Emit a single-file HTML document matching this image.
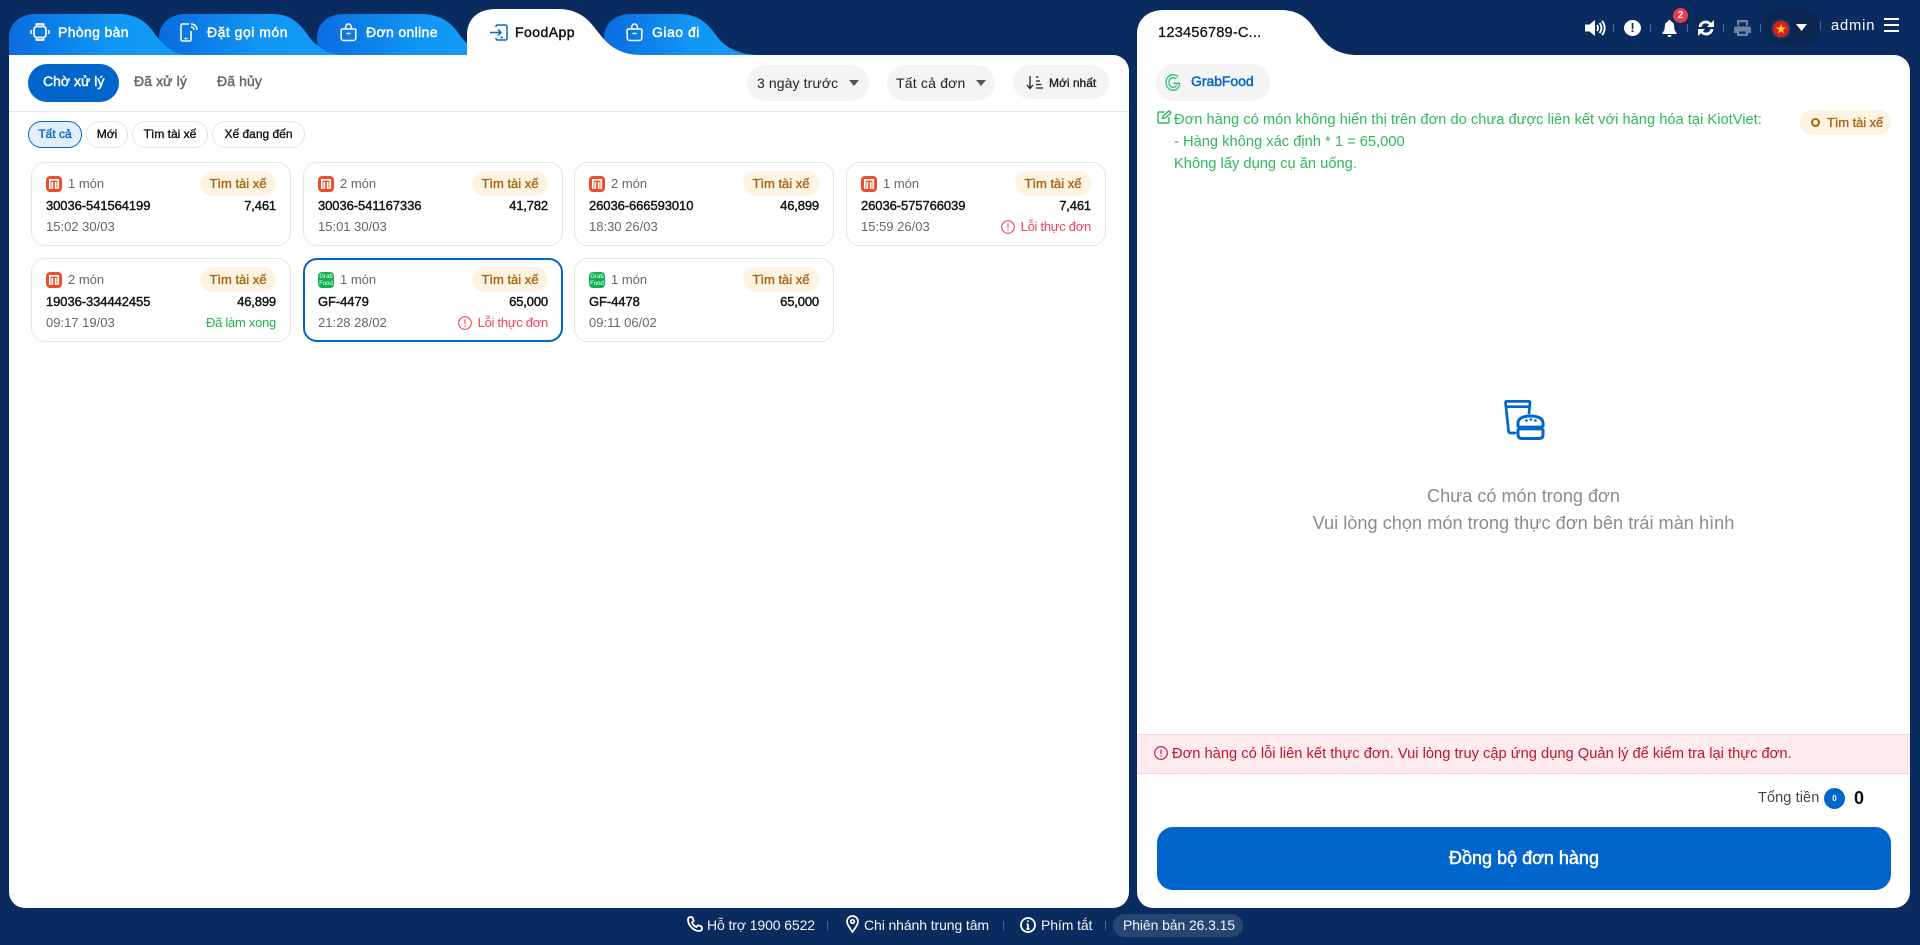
<!DOCTYPE html>
<html lang="vi"><head><meta charset="utf-8"><title>FoodApp</title>
<style>
*{box-sizing:border-box}
html,body{margin:0;padding:0;width:1920px;height:945px;overflow:hidden;background:#0a2b60;font-family:"Liberation Sans",Arial,sans-serif}
.a{position:absolute;white-space:nowrap}
.t{position:absolute;white-space:nowrap;line-height:20px;height:20px}
.m{font-weight:400;-webkit-text-stroke:.45px currentColor}
svg{position:absolute;overflow:visible}
.card{position:absolute;width:260px;height:84px;background:#fff;border:1px solid #e4e4e4;border-radius:14px}
.card.sel{border:2px solid #0066cc}
.card .pill{position:absolute;right:14px;top:8px;width:76px;height:25px;border-radius:13px;background:#fdf3e3;color:#a5660f;font-size:13px;-webkit-text-stroke:.35px currentColor;text-align:center;line-height:25px}
.card .ic{position:absolute;left:14px;top:13px;width:16px;height:16px;border-radius:4px}
.card .n{position:absolute;left:36px;top:11px;font-size:13px;line-height:20px;color:#666}
.card .id{position:absolute;left:14px;top:33px;font-size:13px;line-height:20px;color:#111;-webkit-text-stroke:.4px currentColor;letter-spacing:-.08px}
.card .p{position:absolute;right:14px;top:33px;font-size:13px;line-height:20px;color:#111;-webkit-text-stroke:.4px currentColor;letter-spacing:-.15px}
.card .d{position:absolute;left:14px;top:54px;font-size:13px;line-height:20px;color:#666}
.card .s{position:absolute;right:14px;top:54px;font-size:13px;line-height:20px;letter-spacing:-.27px}
.card .e{color:#f0435c}.card .g{color:#22b14c}
.shop{background:#ee4d2d}
.grab{background:#0fb050;color:#fff;font-size:6px;line-height:6.5px;text-align:center;padding-top:2px}
.chip{position:absolute;top:121px;height:27px;border:1px solid #e6e6e6;border-radius:14px;background:#fff;color:#111;font-size:12px;-webkit-text-stroke:.35px currentColor;text-align:center;line-height:25px}
.sep{position:absolute;width:1px;background:#4d6a93}
</style></head><body>

<svg style="left:0;top:0" width="1920" height="60" viewBox="0 0 1920 60">
<defs>
<linearGradient id="g1" x1="0" x2="1" y1="0" y2="0"><stop offset="0" stop-color="#0a6ce0"/><stop offset=".55" stop-color="#1196f3"/><stop offset="1" stop-color="#129cf7"/></linearGradient>
</defs>
<path fill="url(#g1)" d="M604 55V38C604 23 615 14 632 14H678C702 14 710 27 719 39C729 50 742 55 762 55Z"/>
<path fill="url(#g1)" d="M317 55V38C317 23 328 14 345 14H420C446 14 454 27 462 38C472 50 484 55 500 55Z"/>
<path fill="url(#g1)" d="M159 55V38C159 23 170 14 187 14H272C294 14 302 27 310 38C320 50 330 55 346 55Z"/>
<path fill="url(#g1)" d="M9 55V38C9 23 20 14 37 14H118C142 14 150 27 158 38C168 50 176 55 190 55Z"/>
<path fill="#fff" d="M467 55V35C467 19 478 9 496 9H558C584 9 592 25 602 37C612 49 624 55 642 55Z"/>
<path fill="#fff" d="M1137 60V34C1137 19 1148 10 1164 10H1280C1306 10 1312 26 1321 38C1331 50 1342 55 1358 55Z"/>
</svg>

<div class="a" style="left:9px;top:55px;width:1120px;height:853px;background:#fff;border-radius:0 16px 16px 16px"></div>
<div class="a" style="left:1137px;top:55px;width:773px;height:853px;background:#fff;border-radius:0 16px 16px 16px"></div>

<!-- tab icons -->
<svg style="left:30px;top:23px" width="20" height="18" viewBox="0 0 20 18" fill="none" stroke="#fff" stroke-width="1.700"><rect x="4" y="3.500" width="12" height="11" rx="3"/><path d="M6.500 3.500V1h7v2.500M6.500 14.500V17h7v-2.500M1.200 7v4M18.800 7v4"/></svg>
<svg style="left:180px;top:23px" width="20" height="19" viewBox="0 0 20 19" fill="none" stroke="#fff" stroke-width="1.500"><path d="M9 1H2.500A1.500 1.500 0 0 0 1 2.500v14A1.500 1.500 0 0 0 2.500 18h7a1.500 1.500 0 0 0 1.500-1.500V8M4.500 15.500h3M11 1c3.500 0 6 2.500 6 6M11 4c1.700 0 3 1.300 3 3"/></svg>
<svg style="left:340px;top:23px" width="17" height="18" viewBox="0 0 17 18" fill="none" stroke="#fff" stroke-width="1.500"><path d="M2 6h13a.800.800 0 0 1 .800.800v8.200a2.500 2.500 0 0 1-2.500 2.500H3.700A2.500 2.500 0 0 1 1.200 15V6.800A.800.800 0 0 1 2 6zM5.500 6c0-3 1-5 3-5s3 2 3 5M6.500 10.500h4"/></svg>
<svg style="left:490px;top:24px" width="18" height="17" viewBox="0 0 18 17" fill="none" stroke="#0066cc" stroke-width="1.500"><path d="M6 3V2.500A1.500 1.500 0 0 1 7.500 1h8A1.500 1.500 0 0 1 17 2.500v12a1.500 1.500 0 0 1-1.500 1.500h-8A1.500 1.500 0 0 1 6 14.500V14M0 8.500h11M8 5.500l3 3-3 3M10.500 13.500h2.500"/></svg>
<svg style="left:626px;top:23px" width="17" height="18" viewBox="0 0 17 18" fill="none" stroke="#fff" stroke-width="1.500"><path d="M2 6h13a.800.800 0 0 1 .800.800v8.200a2.500 2.500 0 0 1-2.500 2.500H3.700A2.500 2.500 0 0 1 1.200 15V6.800A.800.800 0 0 1 2 6zM5.500 6c0-3 1-5 3-5s3 2 3 5M6.500 10.500h4"/></svg>

<div class="t m" style="left:58px;top:22px;font-size:14px;color:#fff;letter-spacing:.35px">Phòng bàn</div>
<div class="t m" style="left:207px;top:22px;font-size:14px;color:#fff;letter-spacing:.5px">Đặt gọi món</div>
<div class="t m" style="left:366px;top:22px;font-size:14px;color:#fff;letter-spacing:.35px">Đơn online</div>
<div class="t m" style="left:515px;top:22px;font-size:14px;color:#111;letter-spacing:.45px">FoodApp</div>
<div class="t m" style="left:652px;top:22px;font-size:14px;color:#fff;letter-spacing:.5px">Giao đi</div>
<div class="t m" style="left:1158px;top:23px;font-size:14.700px;color:#111;letter-spacing:.15px;-webkit-text-stroke-width:.25px">123456789-C...</div>

<!-- top right -->
<svg style="left:1585px;top:20px" width="22" height="16" viewBox="0 0 22 16" fill="#fff"><path d="M0 4.500h4.500L10 0v16l-5.500-4.500H0z"/><path fill="none" stroke="#fff" stroke-width="1.900" d="M12 5c1.300 1.500 1.300 4.500 0 6M14.500 3c2.500 2.500 2.500 7.500 0 10M17 1c3.500 3.500 3.500 10.500 0 14"/></svg>
<div class="sep" style="left:1613px;top:24px;height:8px"></div>
<div class="a" style="left:1624px;top:20px;width:17px;height:16px;border-radius:50%;background:#fff;color:#0a2b60;font-size:13px;font-weight:700;text-align:center;line-height:16px">!</div>
<div class="sep" style="left:1650px;top:24px;height:8px"></div>
<svg style="left:1662px;top:20px" width="15" height="17" viewBox="0 0 15 17" fill="#fff"><path d="M7.500 0a1.300 1.300 0 0 1 1.300 1.400C11 2 12.200 4 12.200 6.500c0 3.500 1 4.800 2.300 6.200V14H.5v-1.300C1.800 11.300 2.800 10 2.800 6.500 2.800 4 4 2 6.200 1.400A1.300 1.300 0 0 1 7.500 0zM5.500 15h4a2 2 0 0 1-4 0z"/></svg>
<div class="a" style="left:1673px;top:8px;width:15px;height:15px;border-radius:50%;background:#ee3b4c;color:#fff;font-size:10px;font-weight:700;text-align:center;line-height:15px">2</div>
<div class="sep" style="left:1687px;top:24px;height:8px"></div>
<svg style="left:1698px;top:20px" width="16" height="16" viewBox="0 0 16 16" fill="none" stroke="#fff" stroke-width="2.800"><path d="M2 7c.4-3 2.800-5 5.800-5 2 0 3.500.8 4.700 2.300M14 9c-.4 3-2.800 5-5.800 5-2 0-3.500-.8-4.700-2.300"/><path fill="#fff" stroke="none" d="M16 0v7H9zM0 16V9h7z"/></svg>
<div class="sep" style="left:1723px;top:24px;height:8px"></div>
<svg style="left:1734px;top:20px" width="17" height="16" viewBox="0 0 17 16" fill="#6c83a3"><path d="M3 0h11v5.500h-2.200V2.200H5.200v3.300H3zM2 6.500h13a2 2 0 0 1 2 2V13h-3v3H3v-3H0V8.500a2 2 0 0 1 2-2zm3.200 5v2.300h6.600v-2.300z"/></svg>
<div class="sep" style="left:1760px;top:24px;height:8px"></div>
<div class="a" style="left:1762px;top:9px;width:58px;height:36px;border-radius:18px;background:#0a2651"></div>
<div class="a" style="left:1773px;top:21px;width:16px;height:16px;border-radius:50%;background:#d8201c;box-shadow:0 0 0 1.500px #24416e"></div>
<svg style="left:1776px;top:24px" width="10" height="10" viewBox="0 0 10 10"><path fill="#ffd21f" d="M5 0l1.300 3.500H10L7 5.800 8.100 9.500 5 7.300 1.900 9.500 3 5.800 0 3.500h3.700z"/></svg>
<svg style="left:1796px;top:24px" width="11" height="7" viewBox="0 0 11 7"><path fill="#fff" d="M0 0h11L5.500 7z"/></svg>
<div class="sep" style="left:1820px;top:21px;height:9px"></div>
<div class="t" style="left:1831px;top:16px;font-size:14.700px;color:#fff;letter-spacing:.85px">admin</div>
<div class="a" style="left:1884px;top:18px;width:15px;height:2px;background:#fff"></div>
<div class="a" style="left:1884px;top:24px;width:15px;height:2px;background:#fff"></div>
<div class="a" style="left:1884px;top:30px;width:15px;height:2px;background:#fff"></div>

<!-- Left header -->
<div class="a" style="left:28px;top:64px;width:91px;height:38px;border-radius:19px;background:#0066cc"></div>
<div class="t m" style="left:43px;top:71px;font-size:14px;color:#fff">Chờ xử lý</div>
<div class="t m" style="left:134px;top:71px;font-size:14px;color:#666;letter-spacing:.1px">Đã xử lý</div>
<div class="t m" style="left:217px;top:71px;font-size:14px;color:#666;letter-spacing:.1px">Đã hủy</div>

<div class="a" style="left:747px;top:65px;width:122px;height:36px;border-radius:18px;background:#f4f4f4"></div>
<div class="t" style="left:757px;top:73px;font-size:14px;color:#222;letter-spacing:.1px">3 ngày trước</div>
<svg style="left:849px;top:80px" width="10" height="6" viewBox="0 0 10 6"><path fill="#555" d="M0 0h10L5 6z"/></svg>
<div class="a" style="left:887px;top:65px;width:108px;height:36px;border-radius:18px;background:#f4f4f4"></div>
<div class="t" style="left:896px;top:73px;font-size:14px;color:#222;letter-spacing:.2px">Tất cả đơn</div>
<svg style="left:976px;top:80px" width="10" height="6" viewBox="0 0 10 6"><path fill="#555" d="M0 0h10L5 6z"/></svg>
<div class="a" style="left:1013px;top:65px;width:96px;height:34px;border-radius:17px;background:#f4f4f4"></div>
<svg style="left:1026px;top:75px" width="17" height="15" viewBox="0 0 17 15" fill="none" stroke="#222" stroke-width="1.300"><path d="M4 1v12M1 10l3 3.500L7 10M10 2h2.500M10 6h4M10 9.500h5.500M10 13h7"/></svg>
<div class="t m" style="left:1049px;top:73px;font-size:12px;color:#222;-webkit-text-stroke-width:.35px">Mới nhất</div>
<div class="a" style="left:9px;top:111px;width:1120px;height:1px;background:#e6e6e6"></div>

<div class="chip" style="left:28px;width:54px;background:#e3eefb;border-color:#0066cc;color:#0066cc">Tất cả</div>
<div class="chip" style="left:86px;width:42px">Mới</div>
<div class="chip" style="left:132px;width:76px">Tìm tài xế</div>
<div class="chip" style="left:212px;width:93px">Xế đang đến</div>

<!-- cards -->
<div class="card" style="left:31px;top:162px"><div class="ic shop"><svg style="left:3px;top:3px" width="10" height="10" viewBox="0 0 10 10" fill="none" stroke="#fff" stroke-width="1.700"><path d="M.8 10V.8h8.400V10M3.300 3v7M6.700 3v7"/></svg></div><div class="n">1 món</div><div class="pill">Tìm tài xế</div><div class="id">30036-541564199</div><div class="p">7,461</div><div class="d">15:02 30/03</div></div>
<div class="card" style="left:303px;top:162px"><div class="ic shop"><svg style="left:3px;top:3px" width="10" height="10" viewBox="0 0 10 10" fill="none" stroke="#fff" stroke-width="1.700"><path d="M.8 10V.8h8.400V10M3.300 3v7M6.700 3v7"/></svg></div><div class="n">2 món</div><div class="pill">Tìm tài xế</div><div class="id">30036-541167336</div><div class="p">41,782</div><div class="d">15:01 30/03</div></div>
<div class="card" style="left:574px;top:162px"><div class="ic shop"><svg style="left:3px;top:3px" width="10" height="10" viewBox="0 0 10 10" fill="none" stroke="#fff" stroke-width="1.700"><path d="M.8 10V.8h8.400V10M3.300 3v7M6.700 3v7"/></svg></div><div class="n">2 món</div><div class="pill">Tìm tài xế</div><div class="id">26036-666593010</div><div class="p">46,899</div><div class="d">18:30 26/03</div></div>
<div class="card" style="left:846px;top:162px"><div class="ic shop"><svg style="left:3px;top:3px" width="10" height="10" viewBox="0 0 10 10" fill="none" stroke="#fff" stroke-width="1.700"><path d="M.8 10V.8h8.400V10M3.300 3v7M6.700 3v7"/></svg></div><div class="n">1 món</div><div class="pill">Tìm tài xế</div><div class="id">26036-575766039</div><div class="p">7,461</div><div class="d">15:59 26/03</div><div class="s e">Lỗi thực đơn</div><svg style="left:154px;top:57px" width="14" height="14" viewBox="0 0 14 14" fill="none" stroke="#f0435c" stroke-width="1.100"><circle cx="7" cy="7" r="6.300"/><path d="M7 3.500v4.500M7 9.500v1.200"/></svg></div>

<div class="card" style="left:31px;top:258px"><div class="ic shop"><svg style="left:3px;top:3px" width="10" height="10" viewBox="0 0 10 10" fill="none" stroke="#fff" stroke-width="1.700"><path d="M.8 10V.8h8.400V10M3.300 3v7M6.700 3v7"/></svg></div><div class="n">2 món</div><div class="pill">Tìm tài xế</div><div class="id">19036-334442455</div><div class="p">46,899</div><div class="d">09:17 19/03</div><div class="s g">Đã làm xong</div></div>
<div class="card sel" style="left:303px;top:258px"><div class="ic grab" style="left:13px;top:12px">Grab Food</div><div class="n" style="left:35px;top:10px">1 món</div><div class="pill" style="right:13px;top:7px">Tìm tài xế</div><div class="id" style="left:13px;top:32px">GF-4479</div><div class="p" style="right:13px;top:32px">65,000</div><div class="d" style="left:13px;top:53px">21:28 28/02</div><div class="s e" style="right:13px;top:53px">Lỗi thực đơn</div><svg style="left:153px;top:56px" width="14" height="14" viewBox="0 0 14 14" fill="none" stroke="#f0435c" stroke-width="1.100"><circle cx="7" cy="7" r="6.300"/><path d="M7 3.500v4.500M7 9.500v1.200"/></svg></div>
<div class="card" style="left:574px;top:258px"><div class="ic grab">Grab Food</div><div class="n">1 món</div><div class="pill">Tìm tài xế</div><div class="id">GF-4478</div><div class="p">65,000</div><div class="d">09:11 06/02</div></div>

<!-- Right panel -->
<div class="a" style="left:1156px;top:64px;width:114px;height:37px;border-radius:18px;background:#f4f4f4"></div>
<svg style="left:1165px;top:74px" width="16" height="17" viewBox="0 0 16 17" fill="none" stroke="#2fbf71" stroke-width="1.300"><path d="M13 2.500C11.500 1.300 10 .8 8 .8 4 .8 1 4 1 8.500s3 7.800 7 7.800 6.500-3 6.500-7H8.500M11.500 5C10.500 4 9.500 3.700 8 3.700 5.700 3.700 4 5.700 4 8.500s1.700 4.800 4 4.800 3.500-1.300 3.500-2.500"/></svg>
<div class="t m" style="left:1191px;top:71px;font-size:14px;color:#0066cc;letter-spacing:-.05px">GrabFood</div>

<svg style="left:1157px;top:110px" width="14" height="14" viewBox="0 0 14 14" fill="none" stroke="#2fb95c" stroke-width="1.400"><path d="M7 2H2a1 1 0 0 0-1 1v9a1 1 0 0 0 1 1h9a1 1 0 0 0 1-1V7M5.500 8.500l.5-2.500 6-5.200 2 2L8 8z"/></svg>
<div class="t" style="left:1174px;top:110px;font-size:14.700px;color:#2fb95c">Đơn hàng có món không hiển thị trên đơn do chưa được liên kết với hàng hóa tại KiotViet:</div>
<div class="t" style="left:1174px;top:132px;font-size:14.700px;color:#2fb95c">- Hàng không xác định * 1 = 65,000</div>
<div class="t" style="left:1174px;top:154px;font-size:14.700px;color:#2fb95c">Không lấy dụng cụ ăn uống.</div>

<div class="a" style="left:1800px;top:110px;width:91px;height:25px;border-radius:13px;background:#fdf3e3"></div>
<div class="a" style="left:1811px;top:118px;width:9px;height:9px;border-radius:50%;border:2px solid #a5660f"></div>
<div class="t m" style="left:1827px;top:113px;font-size:12.800px;color:#a5660f;-webkit-text-stroke-width:.35px">Tìm tài xế</div>

<svg style="left:1504px;top:400px" width="41" height="40" viewBox="0 0 41 40" fill="none" stroke="#0066cc" stroke-width="2.700" stroke-linecap="round" stroke-linejoin="round"><path d="M11 33H6.500c-1 0-1.800-.6-1.900-1.600L1.500 2.500C1.400 1.800 1.900 1.400 2.500 1.400h22.500c.7 0 1.100.5 1 1.100L25 13M3.500 6.700h21.500"/><path d="M14 26v-3C14 18 20 16 26.500 16S39 18 39 23v3" stroke-width="3"/><path d="M13.500 28h26" stroke-width="4.800" stroke-linecap="butt"/><path d="M14 30v4.500Q14 38.500 18 38.500H35Q39 38.500 39 34.500V30" stroke-width="3"/><path d="M22 20.500h.8M26.500 19.500h.8M31 20.500h.8" stroke-width="2.200"/></svg>

<div class="a" style="left:1137px;top:480px;width:773px;text-align:center;font-size:18.100px;line-height:32px;color:#8c8c8c">Chưa có món trong đơn</div>
<div class="a" style="left:1137px;top:507px;width:773px;text-align:center;font-size:18.200px;line-height:32px;color:#8c8c8c">Vui lòng chọn món trong thực đơn bên trái màn hình</div>

<div class="a" style="left:1137px;top:734px;width:773px;height:40px;background:#fdebee;border-top:1px solid #f9d5dc;border-bottom:1px solid #f9d5dc"></div>
<svg style="left:1154px;top:746px" width="14" height="14" viewBox="0 0 14 14" fill="none" stroke="#c4132f" stroke-width="1.100"><circle cx="7" cy="7" r="6.300"/><path d="M7 3.500v4.500M7 9.500v1.200"/></svg>
<div class="t" style="left:1172px;top:744px;font-size:14.700px;color:#c4132f">Đơn hàng có lỗi liên kết thực đơn. Vui lòng truy cập ứng dụng Quản lý để kiểm tra lại thực đơn.</div>

<div class="t" style="left:1758px;top:788px;font-size:14.500px;color:#444;letter-spacing:.1px">Tổng tiền</div>
<div class="a" style="left:1824px;top:788px;width:21px;height:21px;border-radius:50%;background:#0066cc;color:#fff;font-size:8px;font-weight:700;text-align:center;line-height:21px">0</div>
<div class="t" style="left:1854px;top:788px;font-size:18px;color:#111;font-weight:700">0</div>

<div class="a" style="left:1157px;top:827px;width:734px;height:63px;border-radius:16px;background:#0066cc;color:#fff;font-size:18px;-webkit-text-stroke:.5px #fff;text-align:center;line-height:62px">Đồng bộ đơn hàng</div>

<!-- footer -->
<svg style="left:687px;top:916px" width="17" height="17" viewBox="0 0 17 17" fill="none" stroke="#fff" stroke-width="1.800"><path d="M1 3.500C1 2 2.200 1 3.500 1l2 .5 1.200 3.500-1.700 1.500c.8 2 2.500 3.700 4.500 4.500l1.500-1.700 3.500 1.200.5 2c0 1.300-1 2.500-2.500 2.500C6.500 15 1 9.500 1 3.500z"/></svg>
<div class="t" style="left:707px;top:915px;font-size:14px;color:#f2f5fa;letter-spacing:-.1px">Hỗ trợ 1900 6522</div>
<div class="sep" style="left:827px;top:921px;height:9px"></div>
<svg style="left:846px;top:915px" width="13" height="18" viewBox="0 0 13 18" fill="none" stroke="#fff" stroke-width="1.700"><path d="M6.500 17C3.500 12.500 1 9.500 1 6.500a5.500 5.500 0 0 1 11 0c0 3-2.500 6-5.500 10.500z"/><circle cx="6.500" cy="6.500" r="1.800"/></svg>
<div class="t" style="left:864px;top:915px;font-size:14px;color:#f2f5fa;letter-spacing:-.1px">Chi nhánh trung tâm</div>
<div class="sep" style="left:1003px;top:921px;height:9px"></div>
<svg style="left:1020px;top:917px" width="16" height="16" viewBox="0 0 16 16" fill="none" stroke="#fff" stroke-width="1.800"><circle cx="8" cy="8" r="7"/><path d="M8 7v5M6.500 7H8M6.500 12h3M8 3.500v1.500"/></svg>
<div class="t" style="left:1041px;top:915px;font-size:14px;color:#f2f5fa;letter-spacing:-.1px">Phím tắt</div>
<div class="sep" style="left:1105px;top:921px;height:9px"></div>
<div class="a" style="left:1113px;top:914px;width:130px;height:23px;border-radius:12px;background:#264570"></div>
<div class="t" style="left:1123px;top:915px;font-size:14px;color:#f2f5fa;letter-spacing:-.1px">Phiên bản 26.3.15</div>
</body></html>
